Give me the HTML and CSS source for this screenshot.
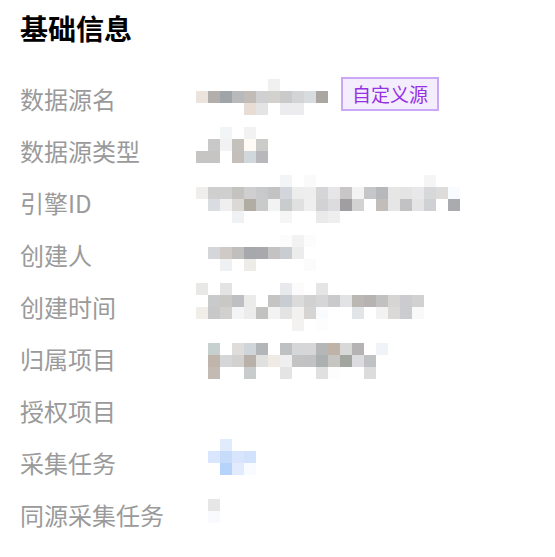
FILE: index.html
```html
<!DOCTYPE html>
<html>
<head>
    <meta charset="UTF-8">
    <meta name="viewport" content="width=device-width, initial-scale=1.0">
    <title>基础信息</title>
    <link rel="stylesheet" href="styles.css">
</head>
<body>
    <div class="panel">
        <h2 class="panel-title">基础信息</h2>
        <div class="info-list">
            <div class="info-row">
                <div class="info-label">数据源名</div>
                <div class="info-value"><span class="tag">自定义源</span></div>
            </div>
            <div class="info-row">
                <div class="info-label">数据源类型</div>
                <div class="info-value"></div>
            </div>
            <div class="info-row">
                <div class="info-label">引擎ID</div>
                <div class="info-value"></div>
            </div>
            <div class="info-row">
                <div class="info-label">创建人</div>
                <div class="info-value"></div>
            </div>
            <div class="info-row">
                <div class="info-label">创建时间</div>
                <div class="info-value"></div>
            </div>
            <div class="info-row">
                <div class="info-label">归属项目</div>
                <div class="info-value"></div>
            </div>
            <div class="info-row">
                <div class="info-label">授权项目</div>
                <div class="info-value"></div>
            </div>
            <div class="info-row">
                <div class="info-label">采集任务</div>
                <div class="info-value"></div>
            </div>
            <div class="info-row">
                <div class="info-label">同源采集任务</div>
                <div class="info-value"></div>
            </div>
        </div>
        <!-- blurred values -->
        <canvas class="mosaic" id="mosaic" width="264" height="444"></canvas>
    </div>
    <script>
        const rows = {
            0: "- - - - - - f0f0f0",
            1: "ede3dd b1aeab 9ea4a7 b8b9bb c1bcb7 d0d0d3 d3d1ce cacacb d3d4d6 d9dcdf aaa6a1",
            2: "- - - - e8ddd5 e5e4e4 - ececee ececee",
            4: "- - f2f5f6 - f2f2f3",
            5: "- c8c8c8 f2f1f3 c4c1bd fffbf4 cbcbc9",
            6: "c6c5c4 c6c5c4 - c4bfbb d1d8dc b8b8bc",
            8: "- - - - - - - f3f4f6 - fafafa - - - - - - - - - f5f5f5",
            9: "efeeec cfcfcf cfcfcf c5c3bf cfcfd0 c8c9cb c3c3c4 d2d6dc ededed eeeeee d5d5d7 e6e6e8 c8c6c7 f3f3f3 c5c6c8 b7b8bc e6e6e6 e4e4e4 e8e8ea d6d8da dedcda f8fbff",
            10: "- d9dde2 efefef dad9d5 b1aca4 c8cbca f3f3f3 c9cccd dfe0df efefef d2d2d4 dcdcdf a19ea1 d2d2d2 fcfeff c2bdb8 e6e6e6 c2c2c4 e4e4e4 cfd1d5 - a9abae",
            11: "- - - eff1f3 - - - f5f5f5 - - eaeaea eeeeee",
            13: "- - - - - - - fcfcfc f2f2f2 fcfcfc",
            14: "- d5d6d9 cfcac6 c0bfbd a7a8ac a9a9ad c4c2c2 c9cdd1 ececec",
            15: "- - eef0f2 - eeece9 - - - - fbfbfb",
            17: "e8e8e7 - e3e3e3 - - - - e8e9ec fbfbfb - e5e5e5",
            18: "- c9cacc c9c8c4 bdbfc2 ebebea - c5c4c3 c8ccd3 dbdbdb d1d1d1 d6d6d8 cacacc e2e3e4 bbb8b3 b7b3b3 c2c1c1 d6d5d4 cbcbd0 d1d1d1",
            19: "f1eeea c8c8c8 d1d0cf f2f4f5 ececec c2c2c0 f3f3f3 e3e3e3 f2f1ef d6d5d3 fafbfd - - e1e5e8 - f2f2f2 dbd9d7 cbccd0 f9f9f9",
            20: "- - - - - - - - f4f2f0 - fdfdfd",
            22: "- c6d0cf - dfdddb cfd5d8 b3b6b8 - bfc0c2 d5d6d8 d6d6d8 b5b6b7 bfb2a6 d8d8d8 b5b3b4 - f0f4f8",
            23: "- c0b5ab d4d6d8 d2d1cf b9b0aa e0e0df efebe4 efefef c3c3c3 c2c2c4 adb0b1 c7c5c2 a3a59f dcdbdf c0c1c3",
            24: "- c4bab4 - - c8cccd - - e4e4e4 - - e0e0e0 fdfdfd - - dcdcdc",
            30: "- - e0ebfc",
            31: "- d9e6fd c7dcfb d9e5fd d3e2fc",
            32: "- - b6d4fb e2ebfd f8fbff",
            35: "- e6e6e6",
            36: "- f8fafd"
        };
        const ctx = document.getElementById('mosaic').getContext('2d');
        Object.keys(rows).forEach((r) => {
            rows[r].split(' ').forEach((c, i) => {
                if (c === '-') return;
                ctx.fillStyle = '#' + c;
                ctx.fillRect(i * 12, r * 12, 12, 12);
            });
        });
    </script>
</body>
</html>
```

FILE: styles.css
```css
body {
    margin: 0;
    font-family: "Noto Sans CJK SC", "Noto Sans", sans-serif;
    background-color: #fff;
    color: #333;
}
.panel {
    position: relative;
    padding: 10px 20px 0;
}
.panel-title {
    margin: 0;
    font-size: 28px;
    line-height: 36px;
    font-weight: bold;
    color: #000;
}
.info-list {
    margin-top: 26px;
}
.info-row {
    display: grid;
    grid-template-columns: 176px 1fr;
    height: 52px;
    align-items: center;
}
.info-label {
    font-size: 24px;
    color: #9a9a9a;
    white-space: nowrap;
}
.info-value {
    display: flex;
    align-items: center;
    height: 100%;
}
.tag {
    margin: -8px 0 0 145px;
    padding: 0 9px;
    border: 2px solid #caa8f6;
    background-color: #f4edfd;
    color: #9631e3;
    font-size: 19px;
    line-height: 30px;
}
.mosaic {
    position: absolute;
    left: 196px;
    top: 79px;
}
```
